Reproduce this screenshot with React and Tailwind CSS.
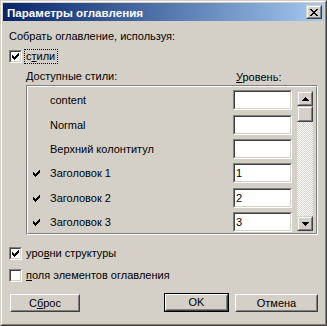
import React from "react";

function Check() {
  return (
    <svg width="7" height="7" viewBox="0 0 7 7" shapeRendering="crispEdges" className="block">
      <rect x="0" y="2" width="1" height="3" fill="#000" />
      <rect x="1" y="3" width="1" height="3" fill="#000" />
      <rect x="2" y="4" width="1" height="3" fill="#000" />
      <rect x="3" y="3" width="1" height="3" fill="#000" />
      <rect x="4" y="2" width="1" height="3" fill="#000" />
      <rect x="5" y="1" width="1" height="3" fill="#000" />
      <rect x="6" y="0" width="1" height="3" fill="#000" />
    </svg>
  );
}

function CheckBox({ checked }) {
  return (
    <div className="w-[13px] h-[13px] shrink-0 border border-t-[#808080] border-l-[#808080] border-b-white border-r-white">
      <div className="w-full h-full border border-t-[#404040] border-l-[#404040] border-b-[#d4d0c8] border-r-[#d4d0c8] bg-white flex items-center justify-center">
        {checked && <Check />}
      </div>
    </div>
  );
}

function Field({ value }) {
  return (
    <div className="w-[59px] h-[20px] shrink-0 border border-t-[#808080] border-l-[#808080] border-b-white border-r-white">
      <div className="w-full h-full border border-t-[#404040] border-l-[#404040] border-b-[#d4d0c8] border-r-[#d4d0c8] bg-white leading-[16px] text-[11px] pl-[1px]">
        {value}
      </div>
    </div>
  );
}

function ScrollBtn({ className = "", children }) {
  return (
    <div className={"border border-t-[#d4d0c8] border-l-[#d4d0c8] border-b-[#404040] border-r-[#404040] " + className}>
      <div className="w-full h-full border border-t-white border-l-white border-b-[#808080] border-r-[#808080] bg-[#d4d0c8] flex items-center justify-center">
        {children}
      </div>
    </div>
  );
}

function Button({ className = "", children }) {
  return (
    <div className={"border border-t-white border-l-white border-b-[#404040] border-r-[#404040] " + className}>
      <div className="w-full h-full border border-t-[#d4d0c8] border-l-[#d4d0c8] border-b-[#808080] border-r-[#808080] bg-[#d4d0c8] flex items-center justify-center text-[11px] leading-[13px]">
        {children}
      </div>
    </div>
  );
}

function ArrowUp() {
  return (
    <svg width="7" height="4" viewBox="0 0 7 4" shapeRendering="crispEdges" className="block">
      <rect x="3" y="0" width="1" height="1" fill="#000" />
      <rect x="2" y="1" width="3" height="1" fill="#000" />
      <rect x="1" y="2" width="5" height="1" fill="#000" />
      <rect x="0" y="3" width="7" height="1" fill="#000" />
    </svg>
  );
}

function ArrowDown() {
  return (
    <svg width="7" height="4" viewBox="0 0 7 4" shapeRendering="crispEdges" className="block">
      <rect x="0" y="0" width="7" height="1" fill="#000" />
      <rect x="1" y="1" width="5" height="1" fill="#000" />
      <rect x="2" y="2" width="3" height="1" fill="#000" />
      <rect x="3" y="3" width="1" height="1" fill="#000" />
    </svg>
  );
}

function CloseX() {
  return (
    <svg width="8" height="7" viewBox="0 0 8 7" shapeRendering="crispEdges" className="block">
      <rect x="0" y="0" width="2" height="1" fill="#000" />
      <rect x="6" y="0" width="2" height="1" fill="#000" />
      <rect x="1" y="1" width="2" height="1" fill="#000" />
      <rect x="5" y="1" width="2" height="1" fill="#000" />
      <rect x="2" y="2" width="4" height="1" fill="#000" />
      <rect x="3" y="3" width="2" height="1" fill="#000" />
      <rect x="2" y="4" width="4" height="1" fill="#000" />
      <rect x="1" y="5" width="2" height="1" fill="#000" />
      <rect x="5" y="5" width="2" height="1" fill="#000" />
      <rect x="0" y="6" width="2" height="1" fill="#000" />
      <rect x="6" y="6" width="2" height="1" fill="#000" />
    </svg>
  );
}

const rows = [
  { name: "content", checked: false, level: "", mt: "mt-0" },
  { name: "Normal", checked: false, level: "", mt: "mt-[5px]" },
  { name: "Верхний колонтитул", checked: false, level: "", mt: "mt-[4px]" },
  { name: "Заголовок 1", checked: true, level: "1", mt: "mt-[4px]" },
  { name: "Заголовок 2", checked: true, level: "2", mt: "mt-[5px]" },
  { name: "Заголовок 3", checked: true, level: "3", mt: "mt-[4px]" },
];

export default function App() {
  return (
    <div className="w-[327px] h-[326px] font-[family-name:'Liberation_Sans',Arial,sans-serif] text-[11px] leading-[13px] text-black">
      <div className="w-full h-full border border-t-[#d4d0c8] border-l-[#d4d0c8] border-b-[#404040] border-r-[#404040]">
        <div className="w-full h-full border border-t-white border-l-white border-b-[#808080] border-r-[#808080] bg-[#d4d0c8] p-[1px] flex flex-col">
          {/* Title bar */}
          <div className="h-[18px] shrink-0 bg-linear-to-r from-[#0a246a] to-[#a6caf0] flex items-center justify-between pl-[4px] pr-[2px]">
            <span className="text-white font-bold text-[11.6px] leading-[13px] whitespace-nowrap">Параметры оглавления</span>
            <ScrollBtn className="w-[16px] h-[14px]">
              <CloseX />
            </ScrollBtn>
          </div>

          {/* Content */}
          <div className="flex flex-col pl-[6px] pr-[3px]">
            <div className="mt-[9px] whitespace-nowrap">Собрать оглавление, используя:</div>

            <div className="mt-[6px] h-[15px] flex items-center">
              <CheckBox checked />
              <span className="ml-[2px] h-[15px] border border-dotted border-black pl-[1px] pr-[2px] leading-[12px] whitespace-nowrap">
                с<span className="underline">т</span>или
              </span>
            </div>

            <div className="mt-[6px] flex pl-[17px] whitespace-nowrap">
              <span className="w-[210px]">Доступные стили:</span>
              <span className="mt-[1px]">
                <span className="underline">У</span>ровень:
              </span>
            </div>

            <div className="ml-[17px] mt-[1px] w-[292px] h-[150px] border border-t-[#808080] border-l-[#808080] border-b-white border-r-white">
              <div className="w-full h-full border border-t-white border-l-white border-b-[#808080] border-r-[#808080] flex pt-[3px] pl-[5px] pr-[3px] gap-[5px]">
                <div className="flex flex-col flex-1">
                  {rows.map((r) => (
                    <div key={r.name} className={"h-[20px] flex items-center " + r.mt}>
                      <div className="w-[17px] flex items-center">{r.checked && <Check />}</div>
                      <span className="flex-1 whitespace-nowrap">{r.name}</span>
                      <Field value={r.level} />
                    </div>
                  ))}
                </div>
                <div className="mt-[1px] w-[16px] h-[140px] flex flex-col">
                  <ScrollBtn className="w-[16px] h-[15px] shrink-0">
                    <ArrowUp />
                  </ScrollBtn>
                  <ScrollBtn className="w-[16px] h-[16px] shrink-0" />
                  <div className="flex-1 bg-[image:repeating-conic-gradient(#ffffff_0%_25%,#d4d0c8_0%_50%)] bg-[length:2px_2px]" />
                  <ScrollBtn className="w-[16px] h-[15px] shrink-0">
                    <ArrowDown />
                  </ScrollBtn>
                </div>
              </div>
            </div>

            <div className="mt-[12px] h-[13px] flex items-center">
              <CheckBox checked />
              <span className="ml-[4px] whitespace-nowrap">
                уро<span className="underline">в</span>ни структуры
              </span>
            </div>
            <div className="mt-[9px] h-[13px] flex items-center">
              <CheckBox />
              <span className="ml-[4px] whitespace-nowrap">
                <span className="underline">п</span>оля элементов оглавления
              </span>
            </div>

            <div className="mt-[11px] flex items-end">
              <Button className="ml-[1px] w-[70px] h-[18px]">
                <span>
                  С<span className="underline">б</span>рос
                </span>
              </Button>
              <div className="ml-auto border border-black w-[65px] h-[19px]">
                <Button className="w-full h-full">OK</Button>
              </div>
              <Button className="ml-[6px] mr-[3px] w-[83px] h-[18px]">Отмена</Button>
            </div>
          </div>
        </div>
      </div>
    </div>
  );
}
